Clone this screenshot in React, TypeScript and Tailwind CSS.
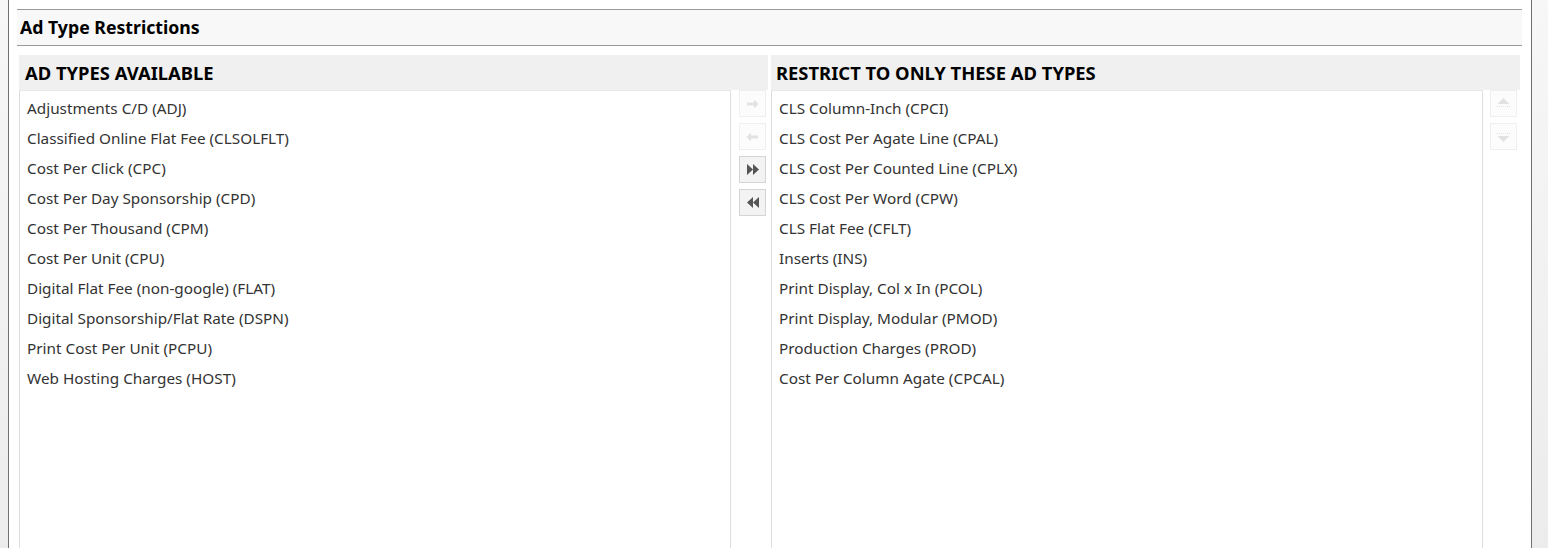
import React from 'react';

const available = [
  'Adjustments C/D (ADJ)',
  'Classified Online Flat Fee (CLSOLFLT)',
  'Cost Per Click (CPC)',
  'Cost Per Day Sponsorship (CPD)',
  'Cost Per Thousand (CPM)',
  'Cost Per Unit (CPU)',
  'Digital Flat Fee (non-google) (FLAT)',
  'Digital Sponsorship/Flat Rate (DSPN)',
  'Print Cost Per Unit (PCPU)',
  'Web Hosting Charges (HOST)',
];

const restricted = [
  'CLS Column-Inch (CPCI)',
  'CLS Cost Per Agate Line (CPAL)',
  'CLS Cost Per Counted Line (CPLX)',
  'CLS Cost Per Word (CPW)',
  'CLS Flat Fee (CFLT)',
  'Inserts (INS)',
  'Print Display, Col x In (PCOL)',
  'Print Display, Modular (PMOD)',
  'Production Charges (PROD)',
  'Cost Per Column Agate (CPCAL)',
];

type IconName = 'right' | 'left' | 'all-right' | 'all-left' | 'up' | 'down';

const Icon: React.FC<{ name: IconName }> = ({ name }) => {
  switch (name) {
    case 'right':
      return (
        <svg width="13" height="12" viewBox="0 0 13 12" fill="currentColor">
          <path d="M1 4.5h7V1.5l4.5 4.5L8 10.5V7.5H1z" />
        </svg>
      );
    case 'left':
      return (
        <svg width="13" height="12" viewBox="0 0 13 12" fill="currentColor">
          <path d="M12 4.5H5V1.5L0.5 6 5 10.5V7.5h7z" />
        </svg>
      );
    case 'all-right':
      return (
        <svg width="14" height="13" viewBox="0 0 14 13" fill="currentColor">
          <path d="M1 1l6 5.5L1 12zM7 1l6 5.5L7 12z" />
        </svg>
      );
    case 'all-left':
      return (
        <svg width="14" height="13" viewBox="0 0 14 13" fill="currentColor">
          <path d="M13 1L7 6.5l6 5.5zM7 1L1 6.5 7 12z" />
        </svg>
      );
    case 'up':
      return (
        <svg width="15" height="13" viewBox="0 0 15 13" fill="currentColor">
          <path d="M7.5 1l6 6h-12z" />
          <path d="M1 9h1v1H1zM3 9h1v1H3zM5 9h1v1H5zM7 9h1v1H7zM9 9h1v1H9zM11 9h1v1h-1zM13 9h1v1h-1z" />
        </svg>
      );
    case 'down':
      return (
        <svg width="15" height="13" viewBox="0 0 15 13" fill="currentColor">
          <path d="M1 3h1v1H1zM3 3h1v1H3zM5 3h1v1H5zM7 3h1v1H7zM9 3h1v1H9zM11 3h1v1h-1zM13 3h1v1h-1z" />
          <path d="M7.5 12l6-6h-12z" />
        </svg>
      );
  }
};

const ToolButton: React.FC<{ icon: IconName; disabled?: boolean }> = ({ icon, disabled }) => (
  <button
    type="button"
    disabled={disabled}
    className={`flex h-[27px] w-[27px] items-center justify-center border ${
      disabled
        ? 'border-[#efefef] bg-[#fcfcfc] text-[#e2e2e2]'
        : 'border-[#d4d4d4] bg-[#f3f3f3] text-[#555]'
    }`}
  >
    <Icon name={icon} />
  </button>
);

const ListColumn: React.FC<{
  title: string;
  items: string[];
  buttons: { icon: IconName; disabled?: boolean }[];
  gap: string;
  pad: string;
}> = ({ title, items, buttons, gap, pad }) => (
  <div className="flex w-[749px] flex-col">
    <div className={`flex h-[35px] items-center bg-[#f0f0f0] ${pad} text-[18.4px] font-bold text-black`}>
      {title}
    </div>
    <div className={`flex flex-1 ${gap}`}>
      <div className="w-[712px] border-x border-t border-x-[#dedede] border-t-[#e8e8e8] bg-white pt-[2px]">
        {items.map((item) => (
          <div key={item} className="flex h-[30px] items-center pl-[7px] text-[15.3px] text-[#333]">
            {item}
          </div>
        ))}
      </div>
      <div className="flex flex-col gap-[6px]">
        {buttons.map((b, i) => (
          <ToolButton key={i} icon={b.icon} disabled={b.disabled} />
        ))}
      </div>
    </div>
  </div>
);

export default function App() {
  return (
    <div
      className="flex h-[548px] w-[1548px] overflow-hidden bg-gradient-to-b from-[#f7f7f7] to-[#ececec]"
      style={{ fontFamily: '"Noto Sans", "Open Sans", sans-serif' }}
    >
      <div className="w-[8px]" />
      <div className="flex w-[1524px] flex-col border-x border-[#707070] bg-white pt-[9px]">
        <div className="ml-[8px] mr-[9px] flex h-[37px] items-center border-y border-[#9a9a9a] bg-[#f8f8f8] pl-[3px] text-[17.7px] font-bold text-black">
          Ad Type Restrictions
        </div>
        <div className="ml-[10px] mt-[9px] flex flex-1 gap-[3px]">
          <ListColumn
            title="AD TYPES AVAILABLE"
            items={available}
            gap="gap-[8px]"
            pad="pl-[6px]"
            buttons={[
              { icon: 'right', disabled: true },
              { icon: 'left', disabled: true },
              { icon: 'all-right' },
              { icon: 'all-left' },
            ]}
          />
          <ListColumn
            title="RESTRICT TO ONLY THESE AD TYPES"
            items={restricted}
            gap="gap-[7px]"
            pad="pl-[5px]"
            buttons={[
              { icon: 'up', disabled: true },
              { icon: 'down', disabled: true },
            ]}
          />
        </div>
      </div>
    </div>
  );
}
